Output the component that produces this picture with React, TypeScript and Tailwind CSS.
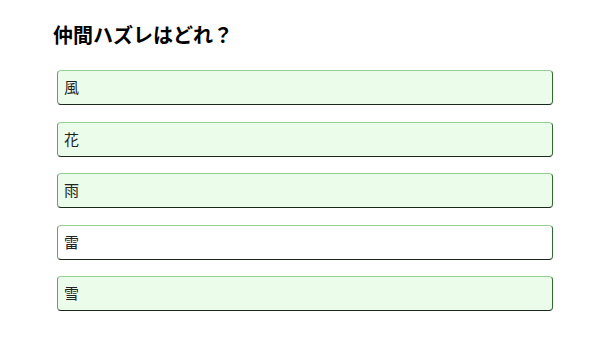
import React from "react";

const items = [
  { t: "風", bg: "bg-[#ebfdea]" },
  { t: "花", bg: "bg-[#ebfdea]" },
  { t: "雨", bg: "bg-[#ebfdea]" },
  { t: "雷", bg: "bg-white" },
  { t: "雪", bg: "bg-[#ebfdea]" },
];

export default function App() {
  return (
    <div
      className="w-[610px] h-[345px] bg-white pt-[21px] pl-[53px]"
      style={{ fontFamily: '"Noto Sans CJK JP", "Noto Sans", sans-serif' }}
    >
      <h1 className="text-[20px] leading-[28px] font-bold text-black">仲間ハズレはどれ？</h1>
      <div className="mt-[21px] ml-[4px] flex flex-col gap-[16.5px]">
        {items.map((it) => (
          <div
            key={it.t}
            className={`w-[496px] h-[35px] rounded-[4px] border border-t-[#94cf94] border-l-[#6f9a6f] border-r-[#2f6a2f] border-b-[#1a2a1a] border-b-[1.5px] ${it.bg} flex items-center pl-[6px] text-[15px] text-[#222]`}
          >
            {it.t}
          </div>
        ))}
      </div>
    </div>
  );
}
